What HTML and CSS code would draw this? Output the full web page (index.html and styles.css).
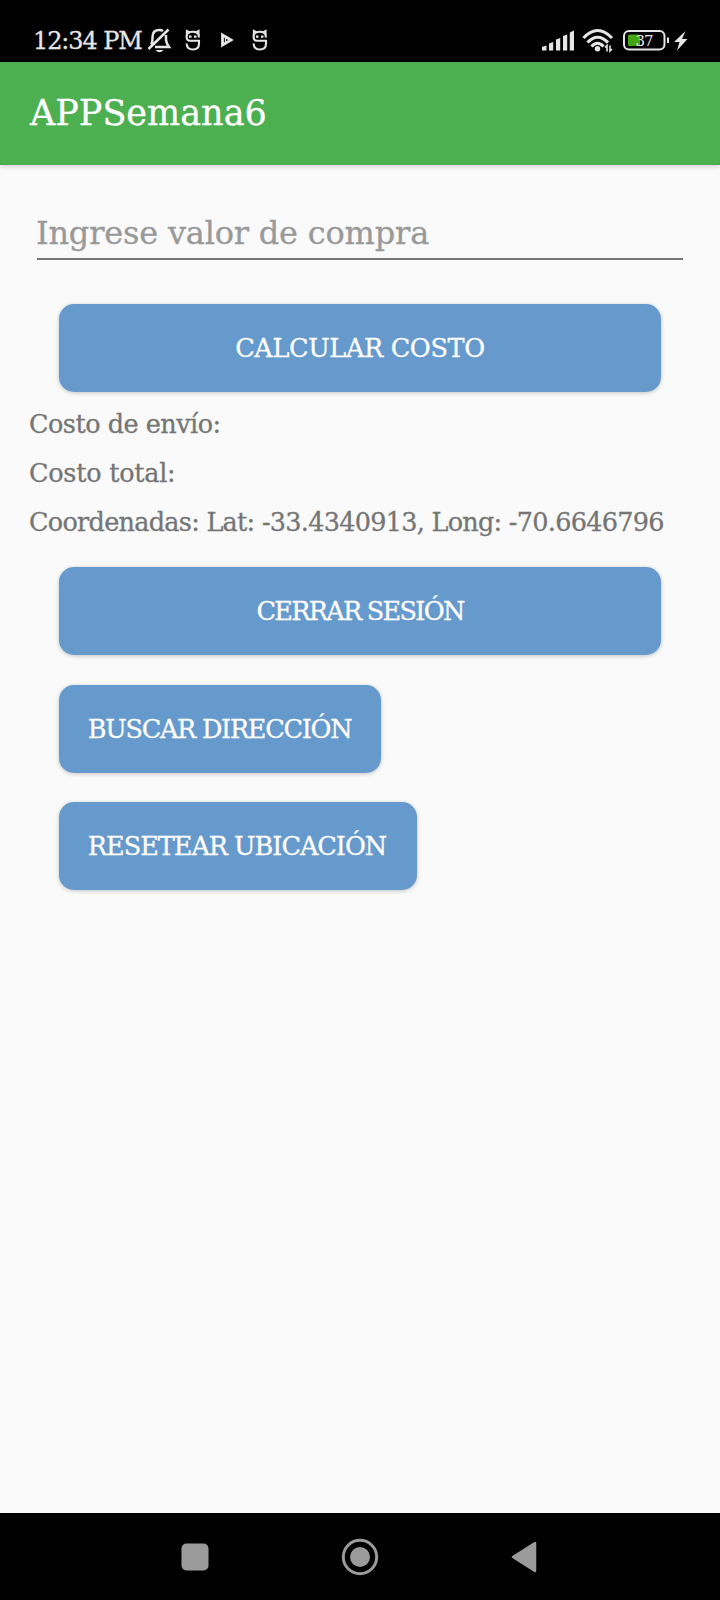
FILE: index.html
```html
<!DOCTYPE html>
<html lang="es">
<head>
<meta charset="utf-8">
<meta name="viewport" content="width=device-width">
<title>APPSemana6</title>
<link rel="stylesheet" href="styles.css">
</head>
<body>
<div class="screen">
  <header class="status">
    <span class="time">12:34 PM</span>
    <svg class="status-left" width="122" height="30" viewBox="0 0 122 30" fill="none" stroke="#e6e6e6" stroke-width="2.5">
      <path d="M5 19.500C7 17 6.500 15 6.500 12C6.500 7 9 5 13.500 5Q15.500 5 17 6M20 10V15Q20.500 18.500 23 22H9M2.500 24L22.500 4.500"/>
      <path d="M9.500 25H17.500Q13.500 29.500 9.500 25Z" fill="#e6e6e6" stroke="none"/>
      <g id="mask" stroke-width="2.1">
        <path d="M52.800 12.500V11.500Q52.800 6.800 46.700 6.800Q40.600 6.800 40.600 11.500Q40.600 15.800 44 15.800H53V18.500Q53 24.500 46.800 24.500Q41 24.500 40.600 18.500"/>
        <path d="M40.600 10.500V5.500L44 7.500M49.500 7.500L52.800 5.500V10.500" stroke-width="1.500"/>
        <path d="M43 11.700H45.500M48 11.700H50.500" stroke-width="2.300"/>
      </g>
      <path d="M76.500 10V20L85 15Z" stroke-width="2.800"/>
      <path d="M79.500 12.500V17.500" stroke-width="1.300"/>
      <use href="#mask" x="67"/>
    </svg>
    <svg class="status-right" width="150" height="30" viewBox="0 0 150 30">
      <path d="M2 22L6.500 20.500V25.500H2ZM9 18.500L13.200 17V25.500H9ZM16 14.500L20.200 13V25.500H16ZM23 11L27.200 9.500V25.500H23ZM29.800 7.500L34 5.500V25.500H29.800Z" fill="#e6e6e6"/>
      <g fill="none" stroke="#e6e6e6" stroke-width="3.200">
        <path d="M43.500 13Q57.500 -2 72 13M47.500 17.500Q57.500 7 68 17.500M51.500 21.500Q57.500 15 63.500 21.500"/>
      </g>
      <circle cx="57.500" cy="23.700" r="2.700" fill="#e6e6e6"/>
      <path d="M67 26.500V20.500L65 22.500M70 20.500V26L72 24" fill="none" stroke="#e6e6e6" stroke-width="1.600"/>
      <rect x="84" y="6" width="40.500" height="18.500" rx="5" fill="none" stroke="#e6e6e6" stroke-width="2"/>
      <rect x="88" y="9.500" width="12" height="11.500" rx="1.500" fill="#43a80f"/>
      <path d="M127 12.500H129V18H127Z" fill="#e6e6e6"/>
      <text x="95.500" y="20.800" class="charge">37</text>
      <path d="M145.500 6L134 17H139.500L137 25.500L147.500 14H142Z" fill="#e6e6e6"/>
    </svg>
  </header>
  <div class="appbar"><h1 class="title">APPSemana6</h1></div>
  <main class="content">
    <div class="field"><span class="hint">Ingrese valor de compra</span></div>
    <button class="btn btn-first">CALCULAR COSTO</button>
    <p class="line line-shipping">Costo de envío:</p>
    <p class="line line-total">Costo total:</p>
    <p class="line line-coords">Coordenadas: Lat: -33.4340913, Long: -70.6646796</p>
    <button class="btn btn-exit">CERRAR SESIÓN</button>
    <button class="btn btn-search">BUSCAR DIRECCIÓN</button>
    <button class="btn btn-reset">RESETEAR UBICACIÓN</button>
  </main>
  <nav class="nav">
    <svg width="28" height="28" viewBox="0 0 28 28"><rect x=".5" y=".5" width="27" height="27" rx="5" fill="#9b9b9b"/></svg>
    <svg width="38" height="38" viewBox="0 0 38 38"><circle cx="19" cy="19" r="16.700" fill="none" stroke="#9b9b9b" stroke-width="3"/><circle cx="19" cy="19" r="10" fill="#9b9b9b"/></svg>
    <svg width="26" height="32" viewBox="0 0 26 32"><path d="M2 16L24 2V30Z" fill="#9b9b9b" stroke="#9b9b9b" stroke-width="2.500" stroke-linejoin="round"/></svg>
  </nav>
</div>
</body>
</html>
```
FILE: styles.css
```css
* { box-sizing: border-box; }
body { margin: 0; }
.screen {
  width: 720px;
  height: 1600px;
  display: flex;
  flex-direction: column;
  background: #fafafa;
  font-family: "DejaVu Serif", serif;
  color: #757575;
  -webkit-text-stroke: .3px currentColor;
}
.status {
  height: 62px;
  flex: none;
  display: flex;
  align-items: flex-start;
  padding: 25px 30px 0 33px;
  background: #000;
  color: #e6e6e6;
}
.time { width: 113px; font-size: 24px; line-height: 32px; letter-spacing: -1.1px; white-space: nowrap; }
.status-left { flex: none; }
.status-right { flex: none; margin-left: auto; }
.charge { font-size: 15px; letter-spacing: -1px; fill: #e6e6e6; }
.appbar {
  height: 102.500px;
  flex: none;
  display: flex;
  align-items: center;
  padding-left: 30px;
  background: #4caf50;
  box-shadow: 0 1px 6px rgba(0, 0, 0, .2);
}
.title { margin: 0; font-size: 35px; font-weight: 400; color: #fff; }
.content {
  flex: 1;
  display: flex;
  flex-direction: column;
  align-items: flex-start;
  padding: 44.500px 29px 0;
}
.field {
  width: 646px;
  height: 51px;
  margin-left: 8px;
  border-bottom: 2px solid #777;
  font-size: 32px;
  line-height: 49px;
  letter-spacing: -.2px;
  color: #999;
  white-space: nowrap;
}
.hint { margin-left: -1px; }
.btn {
  height: 88px;
  margin: 0 0 29px 30px;
  padding: 0 0 1px;
  border: 0;
  border-radius: 15px;
  background: #6699cc;
  color: #fff;
  font: inherit;
  font-size: 25.500px;
  -webkit-text-stroke: .3px currentColor;
  white-space: nowrap;
  box-shadow: 0 1px 4px rgba(0, 0, 0, .22);
}
.btn-first { width: 602px; margin-top: 44px; margin-bottom: 8px; letter-spacing: -.33px; }
.btn-exit { width: 602px; margin-top: 20px; margin-bottom: 30px; letter-spacing: -1.7px; }
.btn-search { width: 322px; padding-right: 1px; letter-spacing: -1.25px; }
.btn-reset { width: 358px; padding-right: 2px; letter-spacing: -1px; }
.line { margin: 0; height: 49px; line-height: 48px; font-size: 25.500px; white-space: nowrap; }
.line-shipping { letter-spacing: -.5px; }
.line-total { letter-spacing: -.25px; }
.line-coords { line-height: 49px; letter-spacing: -.72px; }
.nav {
  height: 87px;
  flex: none;
  display: flex;
  align-items: center;
  justify-content: space-between;
  padding: 0 183px 0 181px;
  background: #000;
}
```
